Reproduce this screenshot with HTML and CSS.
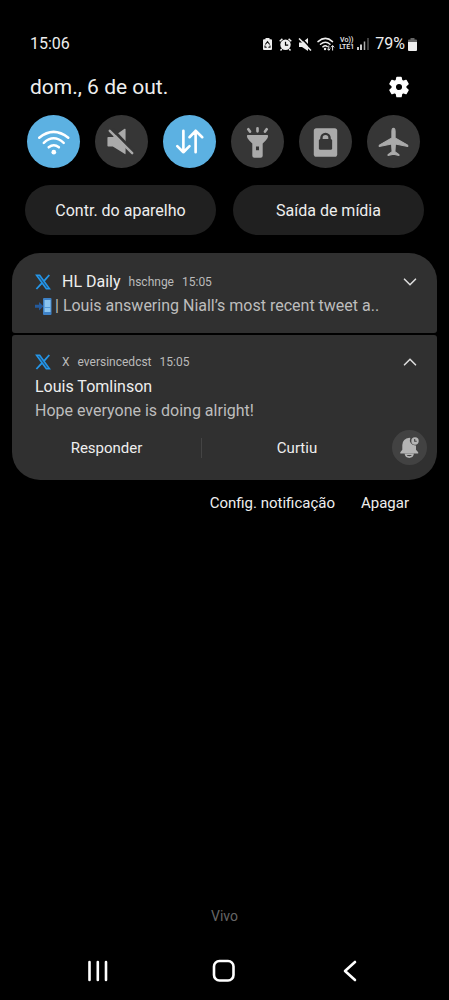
FILE: index.html
```html
<!DOCTYPE html>
<html lang="pt-BR">
<head>
<meta charset="utf-8">
<meta name="viewport" content="width=device-width, initial-scale=1">
<title>Notificações</title>
<link rel="stylesheet" href="styles.css">
</head>
<body>
<svg class="defs" aria-hidden="true">
  <symbol id="x-logo" viewBox="0 0 16 16">
    <path d="M1.500 1.200h3.200l9.800 13.600h-3.200z" fill="#20557f" stroke="#2596e8" stroke-width="1.500"/>
    <path d="M14.300 1 8.900 7.200M6.900 9.200 1.400 15" fill="none" stroke="#2596e8" stroke-width="1.800"/>
  </symbol>
</svg>

<header class="status">
  <time class="clock">15:06</time>
  <div class="status-icons">
    <svg width="9" height="12" viewBox="0 0 9 12"><path d="M2.500 0h4v1.200H8q1 0 1 1V11q0 1-1 1H1q-1 0-1-1V2.200q0-1 1-1h1.500z" fill="#eee"/><path d="M2.300 6.500 4.500 3.700l2.200 2.800M2 7.500v1.800h1.700M7 7.500v1.800H5.300" fill="none" stroke="#111" stroke-width="1.100"/></svg>
    <svg class="alarm" width="13" height="13" viewBox="0 0 13 13"><circle cx="6.500" cy="6.800" r="5.200" fill="#eee"/><path d="M.7 3.200 3.400.9M12.300 3.200 9.600.9M2.800 11 1.500 12.500M10.200 11l1.300 1.500" stroke="#eee" stroke-width="1.500"/><path d="M6.500 3.700v3.400h2.700" fill="none" stroke="#000" stroke-width="1.200"/></svg>
    <svg class="muted" width="14" height="13" viewBox="0 0 28 26"><path d="M2 9h6l12-9v26L8 18H2z" fill="#eee"/><path d="m5-2 24 26" stroke="#000" stroke-width="3"/><path d="m2 1 24 24" stroke="#eee" stroke-width="3"/></svg>
    <svg class="wifi-small" width="18" height="14" viewBox="0 0 18 14"><path d="M1 4.600q7.500-6.500 14.500 0M3.500 7.300q5-4.200 9.500 0M5.900 9.800q2.400-2 4.300-.3" fill="none" stroke="#eee" stroke-width="1.500" stroke-linecap="round"/><circle cx="8" cy="12" r="1.200" fill="#eee"/><path d="M11.800 8.500v4.700m-1.600-1.600 1.600 1.700 1.600-1.700M15.600 13.500V8.700M14 10.300l1.600-1.700 1.600 1.700" fill="none" stroke="#eee"/></svg>
    <span class="volte"><span>Vo))</span><span>LTE1</span></span>
    <svg class="signal" width="12" height="12" viewBox="0 0 12 12"><path d="M1 9v3M4 6.500V12" stroke="#eee" stroke-width="1.700"/><path d="M7.500 3.500V12" stroke="#aaa" stroke-width="1.500"/><path d="M11 0v12" stroke="#555" stroke-width="1.500"/></svg>
    <span class="percent">79%</span>
    <svg width="9" height="13" viewBox="0 0 9 13"><path d="M2.500 0h4v1.500H8q1 0 1 1V4H0V2.500q0-1 1-1h1.500z" fill="#666"/><path d="M0 4h9v8q0 1-1 1H1q-1 0-1-1z" fill="#eee"/></svg>
  </div>
</header>

<main class="panel">
  <div class="date-row">
    <h1>dom., 6 de out.</h1>
    <button class="plain" aria-label="Configurações">
      <svg width="22" height="22" viewBox="0 0 22 22"><path fill="#fff" stroke="#fff" stroke-width="1.500" stroke-linejoin="round" fill-rule="evenodd" d="M9 1.500h4l.6 3 1.500.9 2.900-1 2 3.500-2.300 2v2.200l2.300 2-2 3.500-2.900-1-1.500.9-.6 3H9l-.6-3-1.500-.9-2.900 1-2-3.500 2.300-2V9.900L2 7.900l2-3.500 2.900 1 1.500-.9zM11 7.200a3.800 3.800 0 1 0 0 7.600 3.800 3.800 0 0 0 0-7.600z"/></svg>
    </button>
  </div>

  <div class="toggles">
    <button class="toggle on" aria-label="Wi-Fi" aria-pressed="true"><svg viewBox="0 0 52 52"><path d="M12 22.300q14-11.500 28.500 0M16.500 27.300q9.500-9 19.500 0M21.300 31.700q5-4 10 0" fill="none" stroke="#fff" stroke-width="2.500" stroke-linecap="round"/><circle cx="26.300" cy="36.500" r="2.300" fill="#fff"/></svg></button>
    <button class="toggle" aria-label="Som" aria-pressed="false"><svg viewBox="0 0 52 52"><path d="M13 21.500h4.500L29 13.500q1-.4 1 .7v23.300q0 1.400-1 .6L17.500 31H13q-.8 0-.8-.8v-7.900q0-.8.8-.8z" fill="#aaa"/><path d="m17 14 21 22" stroke="#363636" stroke-width="3"/><path d="m14.500 15.500 22 22" stroke="#aaa" stroke-width="2.400" stroke-linecap="round"/></svg></button>
    <button class="toggle on" aria-label="Dados móveis" aria-pressed="true"><svg viewBox="0 0 52 52"><path d="M20 15.500v21m-6-6 6 6 6-6M32 36.500v-21m-6 6.300 6-6.300 6.500 6.300" fill="none" stroke="#fff" stroke-width="2.600" stroke-linecap="round" stroke-linejoin="round"/></svg></button>
    <button class="toggle" aria-label="Lanterna" aria-pressed="false"><svg viewBox="0 0 52 52"><path d="m17 14 1.600 2.300M26 13v3M35 14l-1.600 2.300" stroke="#aaa" stroke-width="2.600" stroke-linecap="round"/><path fill="#aaa" fill-rule="evenodd" d="M16.500 19.500h19q.9 0 .9 1 0 2.500-2.300 4.500l-3 3v12q0 2-2 2h-6.200q-2 0-2-2V28l-3-3q-2.300-2-2.300-4.500 0-1 .9-1zM24.500 31v3.500h3V31z"/></svg></button>
    <button class="toggle" aria-label="Bloqueio de rotação" aria-pressed="false"><svg viewBox="0 0 52 52"><rect x="14.500" y="13" width="23" height="28" rx="2.500" fill="#aaa"/><rect x="19.500" y="23.500" width="13" height="10.500" rx="1.500" fill="#363636"/><path d="M22 24v-1.500a4 4 0 0 1 8 0V24" fill="none" stroke="#363636" stroke-width="2.400"/></svg></button>
    <button class="toggle" aria-label="Modo avião" aria-pressed="false"><svg viewBox="0 0 52 52"><path fill="#aaa" stroke="#aaa" stroke-linejoin="round" d="M26 13q1.600.2 1.600 3v6.500l11.900 6.800q1 .7.5 1.700L27.900 28.500l-.5 7.500 4 3v.7L26 38.500l-5.400 1.200V39l4-3-.5-7.500L12 31q-.5-1 .5-1.700l11.900-6.800V16q0-2.800 1.600-3z"/></svg></button>
  </div>

  <div class="shortcuts">
    <button class="shortcut">Contr. do aparelho</button>
    <button class="shortcut">Saída de mídia</button>
  </div>

  <section class="notifications" aria-label="Notificações">
    <article class="card collapsed">
      <div class="card-head">
        <svg class="logo" width="16" height="16"><use href="#x-logo"/></svg>
        <h2>HL Daily</h2><span class="meta">hschnge</span><time class="meta">15:05</time>
        <button class="plain chevron" aria-label="Expandir"><svg width="14" height="8" viewBox="0 0 14 8"><path d="m1.500 1.200 5.500 5.500 5.500-5.500" fill="none" stroke="#ddd" stroke-width="1.600" stroke-linecap="round"/></svg></button>
      </div>
      <p class="message">
        <svg class="phone" width="18" height="17" viewBox="0 0 18 17"><path d="M0 6.700h4V4l4.500 4.200L4 12.400V9.700H0z" fill="#245a9c"/><rect x="8" width="8.500" height="17" rx="1" fill="#3e82c7"/><path d="M9.500 2h6v12h-6z" fill="#8ac4ef"/><path d="M9.500 9.500h6" stroke="#559ad8"/></svg>
        <span>| Louis answering Niall’s most recent tweet a..</span>
      </p>
    </article>

    <article class="card expanded">
      <div class="card-head">
        <svg class="logo" width="16" height="16"><use href="#x-logo"/></svg>
        <span class="meta app">X</span><span class="meta">eversincedcst</span><time class="meta">15:05</time>
        <button class="plain chevron" aria-label="Recolher"><svg width="14" height="8" viewBox="0 0 14 8"><path d="M1.500 6.800 7 1.300l5.500 5.500" fill="none" stroke="#ddd" stroke-width="1.600" stroke-linecap="round"/></svg></button>
      </div>
      <h3>Louis Tomlinson</h3>
      <p class="message">Hope everyone is doing alright!</p>
      <div class="actions">
        <button class="plain action">Responder</button>
        <button class="plain action">Curtiu</button>
        <button class="snooze" aria-label="Adiar"><svg width="35" height="35" viewBox="0 0 35 35"><path d="M8.300 23.500v-1.200l2-2.500V15q.4-6.500 7-7.200l1 .2a5.500 5.500 0 0 0 4.900 7.600l.8-.1v4.300l2.200 2.500v1.200z" fill="#b4b4b4"/><path d="M13.500 24.200h7.500a3.800 3.500 0 0 1-7.500 0z" fill="none" stroke="#b4b4b4" stroke-width="1.600"/><circle cx="23" cy="11" r="3.700" fill="#b4b4b4"/><path d="M22.700 9v2.300h2" fill="none" stroke="#444" stroke-width="1.100"/></svg></button>
      </div>
    </article>
  </section>

  <div class="footer-actions">
    <button class="plain">Config. notificação</button>
    <button class="plain">Apagar</button>
  </div>
  <p class="carrier">Vivo</p>
</main>

<nav class="navbar" aria-label="Sistema">
  <button class="plain" aria-label="Recentes"><svg width="24" height="24" viewBox="0 0 24 24"><path d="M3.500 3v18M11.800 3v18M20 3v18" stroke="#fff" stroke-width="2.600" stroke-linecap="round"/></svg></button>
  <button class="plain" aria-label="Início"><svg width="24" height="24" viewBox="0 0 24 24"><rect x="2" y="2" width="19.500" height="19.500" rx="5.500" fill="none" stroke="#fff" stroke-width="2.600"/></svg></button>
  <button class="plain" aria-label="Voltar"><svg width="24" height="24" viewBox="0 0 24 24"><path d="m17 3-10 9 10 9" fill="none" stroke="#fff" stroke-width="2.600" stroke-linecap="round" stroke-linejoin="round"/></svg></button>
</nav>
</body>
</html>
```
FILE: styles.css
```css
* { box-sizing: border-box; }

body {
  margin: 0;
  min-height: 100vh;
  display: flex;
  flex-direction: column;
  background: #000;
  color: #eee;
  font: 16px/20px Roboto, sans-serif;
}

h1, h2, h3, p { margin: 0; font-weight: 400; }
svg { display: block; flex: none; }
button { font: inherit; color: inherit; border: 0; padding: 0; cursor: pointer; }
.plain { background: none; }
.defs { position: absolute; width: 0; height: 0; }

.status {
  display: flex;
  justify-content: space-between;
  align-items: center;
  height: 24px;
  margin-top: 32px;
  padding: 0 32px 0 30px;
}
.status-icons { display: flex; align-items: center; }
.alarm { margin-left: 7px; }
.muted { margin-left: 6px; }
.wifi-small { margin-left: 5px; }
.volte {
  display: flex;
  flex-direction: column;
  align-items: center;
  margin-left: 4px;
  font-size: 7px;
  line-height: 7px;
  font-weight: 500;
}
.signal { margin-left: 3px; }
.percent { margin: 0 3px 0 6px; }

.panel { flex: 1; display: flex; flex-direction: column; }

.date-row {
  display: flex;
  justify-content: space-between;
  align-items: center;
  height: 28px;
  margin-top: 17px;
  padding: 0 39px 0 30px;
}
h1 { font-size: 21px; line-height: 28px; }

.toggles {
  display: flex;
  justify-content: space-between;
  margin-top: 14px;
  padding: 0 29px 0 27px;
}
.toggle {
  width: 53px;
  height: 53px;
  border-radius: 50%;
  background: #363636;
}
.toggle.on { background: #5cb1e2; }

.shortcuts {
  display: grid;
  grid-template-columns: 1fr 1fr;
  gap: 17px;
  margin-top: 17px;
  padding: 0 25px;
}
.shortcut {
  height: 50px;
  padding-top: 2px;
  border-radius: 25px;
  background: #202020;
}

.notifications {
  display: flex;
  flex-direction: column;
  gap: 2px;
  margin-top: 18px;
  padding: 0 12px;
}
.card {
  border-radius: 3px;
  background: #303030;
}
.collapsed { padding: 19px 20px 15px 23px; border-radius: 28px 28px 3px 3px; }
.expanded { padding: 17px 20px 1px 23px; border-radius: 3px 3px 28px 28px; }

.card-head { display: flex; align-items: center; gap: 8px; height: 20px; }
.logo { margin-right: 3px; }
h2 { font-size: 16px; }
.meta { color: #bbb; font-size: 12px; }
.chevron { margin-left: auto; }

.message {
  display: flex;
  align-items: center;
  height: 24px;
  color: #bdbdbd;
  white-space: nowrap;
}
.collapsed .message { margin-top: 2px; }
.phone { margin-right: 2px; }
h3 { margin-top: 3px; font-size: 16px; line-height: 24px; }

.actions {
  display: grid;
  grid-template-columns: 1fr 1fr 35px;
  align-items: center;
  margin: 7px -10px 0 -23px;
  padding-bottom: 14px;
}
.action { font-size: 15px; }
.action:first-child { border-right: 1px solid #444; }
.snooze { width: 35px; height: 35px; border-radius: 50%; background: #424242; }

.footer-actions {
  display: flex;
  justify-content: flex-end;
  gap: 26px;
  margin-top: 13px;
  padding-right: 40px;
  font-size: 15px;
}
.carrier {
  margin-top: auto;
  color: #666;
  font-size: 14px;
  text-align: center;
}

.navbar {
  display: flex;
  justify-content: space-between;
  margin-top: 33px;
  padding: 0 87px 17px 86px;
}
```
